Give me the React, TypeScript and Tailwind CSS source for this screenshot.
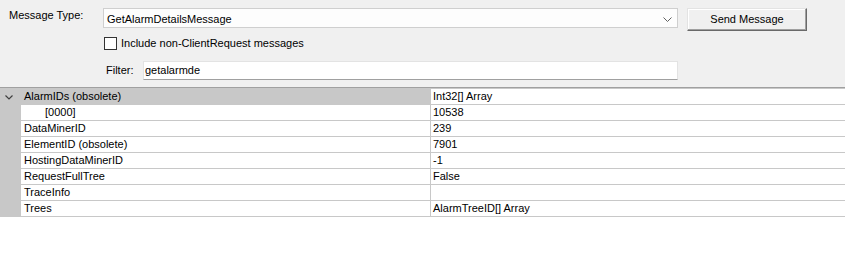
import React from "react";

const rows: { name: string; value: string; indent?: boolean; category?: boolean }[] = [
  { name: "AlarmIDs (obsolete)", value: "Int32[] Array", category: true },
  { name: "[0000]", value: "10538", indent: true },
  { name: "DataMinerID", value: "239" },
  { name: "ElementID (obsolete)", value: "7901" },
  { name: "HostingDataMinerID", value: "-1" },
  { name: "RequestFullTree", value: "False" },
  { name: "TraceInfo", value: "" },
  { name: "Trees", value: "AlarmTreeID[] Array" },
];

export default function App() {
  return (
    <div
      className="w-[845px] h-[279px] bg-white text-black text-[11px] overflow-hidden"
      style={{ fontFamily: '"Liberation Sans", Arial, sans-serif' }}
    >
      {/* top panel */}
      <div className="h-[88px] bg-[#f0f0f0] border-b border-[#a0a0a0] flex flex-col">
        <div className="flex items-start pt-[8px] h-[31px]">
          <div className="w-[103px] pl-[9px] leading-[15px]">Message Type:</div>
          <div className="w-[575px] h-[20px] bg-[#fdfdfd] border border-[#cfcfcf] flex items-center pl-[3px] leading-[15px] pt-[2px]">
            <span>GetAlarmDetailsMessage</span>
            <svg className="ml-auto mr-[5px]" width="9" height="5" viewBox="0 0 9 5">
              <path d="M0.5 0.5 L4.5 4.5 L8.5 0.5" fill="none" stroke="#606060" strokeWidth="1" />
            </svg>
          </div>
          <button className="ml-[9px] w-[120px] h-[23px] bg-[#f0f0f0] border border-t-[#e3e3e3] border-l-[#e3e3e3] border-r-[#696969] border-b-[#696969] shadow-[inset_-1px_-1px_0_#a0a0a0,inset_1px_1px_0_#ffffff] leading-[15px] text-[11px]">
            Send Message
          </button>
        </div>
        <div className="flex items-center mt-[6px] h-[13px] pl-[104px]">
          <div className="w-[13px] h-[13px] border border-[#333333] bg-white" />
          <div className="ml-[4px] leading-[13px]">Include non-ClientRequest messages</div>
        </div>
        <div className="flex items-center mt-[11px] h-[19px]">
          <div className="w-[143px] pl-[106px] leading-[15px]">Filter:</div>
          <div className="w-[535px] h-[19px] bg-white border border-[#e3e3e3] border-b-[#a0a0a0] pl-[1px] flex items-center leading-[15px]">
            getalarmde
          </div>
        </div>
      </div>

      {/* property grid */}
      <div className="border-t border-[#c8c8c8]">
        {rows.map((r, i) => (
          <div key={i} className="flex h-[16px]">
            <div className="w-[21px] bg-[#c8c8c8] flex items-center justify-center pr-[4px]">
              {r.category && (
                <svg width="8" height="5" viewBox="0 0 8 5">
                  <path d="M0.5 0.5 L4 4 L7.5 0.5" fill="none" stroke="#404040" strokeWidth="1.2" />
                </svg>
              )}
            </div>
            <div className="flex-1 flex border-b border-[#c8c8c8]">
              <div
                className={
                  "w-[410px] border-r border-[#c8c8c8] leading-[15px] whitespace-nowrap " +
                  (r.category ? "bg-[#c8c8c8] " : "") +
                  (r.indent ? "pl-[24px]" : "pl-[3px]")
                }
              >
                {r.name}
              </div>
              <div className="flex-1 pl-[2px] leading-[15px] whitespace-nowrap">{r.value}</div>
            </div>
          </div>
        ))}
      </div>
    </div>
  );
}
